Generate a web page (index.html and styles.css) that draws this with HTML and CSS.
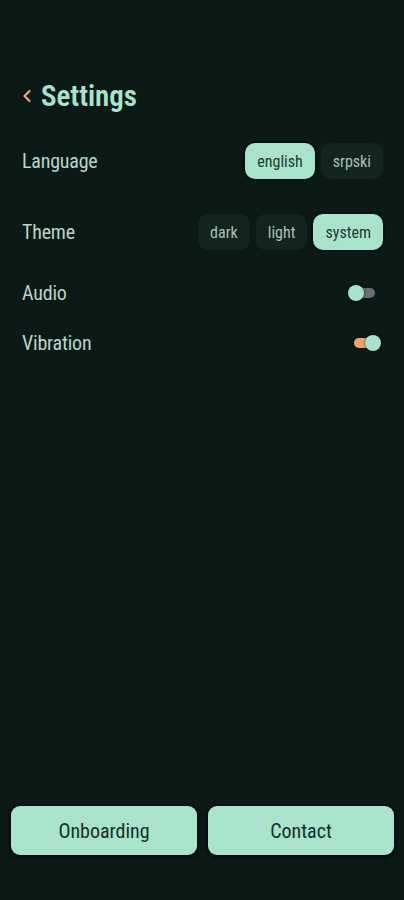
FILE: index.html
```html
<!DOCTYPE html>
<html lang="en">
<head>
    <meta charset="UTF-8">
    <meta name="viewport" content="width=device-width, initial-scale=1.0">
    <title>Settings</title>
    <link rel="stylesheet" href="styles.css">
</head>

<body>
    <div class="screen">
        <div class="content">
            <div class="header">
                <span class="back">
                    <svg width="10" height="14" viewBox="0 0 10 14"><path d="M7.5 2 L2.5 7 L7.5 12" fill="none" stroke="#f0a06a" stroke-width="2.4" stroke-linecap="round" stroke-linejoin="round"/></svg>
                </span>
                <h1>Settings</h1>
            </div>

            <div class="group">
                <div class="setting">
                    <span class="label">Language</span>
                    <div class="pills">
                        <span class="pill active">english</span>
                        <span class="pill">srpski</span>
                    </div>
                </div>
                <div class="setting">
                    <span class="label">Theme</span>
                    <div class="pills">
                        <span class="pill">dark</span>
                        <span class="pill">light</span>
                        <span class="pill active">system</span>
                    </div>
                </div>
            </div>

            <div class="group switches">
                <div class="setting">
                    <span class="label">Audio</span>
                    <span class="toggle off"><span class="knob"></span></span>
                </div>
                <div class="setting">
                    <span class="label">Vibration</span>
                    <span class="toggle on"><span class="knob"></span></span>
                </div>
            </div>
        </div>

        <div class="footer">
            <button class="btn">Onboarding</button>
            <button class="btn">Contact</button>
        </div>
    </div>
</body>
</html>
```

FILE: styles.css
```css
*{
    box-sizing: border-box;
    font-family: "Roboto Condensed", "Open Sans", sans-serif;
    font-stretch: 75%;
}

body{
    margin: 0;
    background-color: #0c1a17;
    color: #b7d4c7;
}

.screen{
    min-height: 100vh;
    display: flex;
    flex-direction: column;
}

.content{
    flex: 1;
    padding: 78px 21px 0 22px;
}

.header{
    display: flex;
    align-items: center;
    gap: 9px;
    height: 36px;
}

.back{
    display: flex;
    align-items: center;
}

.header h1{
    margin: 0;
    font-size: 29px;
    font-weight: 600;
    color: #a9e3cb;
}

.group{
    margin-top: 22px;
    display: flex;
    flex-direction: column;
    gap: 21px;
}

.switches{
    margin-top: 11px;
    gap: 0;
}

.setting{
    display: flex;
    align-items: center;
    justify-content: space-between;
    height: 50px;
}

.label{
    font-size: 20px;
    letter-spacing: -0.2px;
}

.pills{
    display: flex;
    gap: 6px;
}

.pill{
    height: 36px;
    padding: 0 12px;
    display: flex;
    align-items: center;
    border-radius: 10px;
    background-color: #13251f;
    color: #a5c2b6;
    font-size: 16px;
}

.pill.active{
    background-color: #aae3cc;
    color: #1a3a30;
    box-shadow: 0 0 0 2px #07110e;
}

.toggle{
    position: relative;
    width: 27px;
    height: 16px;
    margin-right: 8px;
}

.toggle::before{
    content: "";
    position: absolute;
    left: 2px;
    right: 0;
    top: 3px;
    height: 10px;
    border-radius: 5px;
    background-color: #6b6f72;
}

.toggle.on{
    margin-right: 2px;
}

.toggle.on::before{
    background-color: #f2a26e;
    right: 4px;
    left: 0;
}

.knob{
    position: absolute;
    top: 0;
    left: 0;
    width: 16px;
    height: 16px;
    border-radius: 50%;
    background-color: #a9e2cb;
    box-shadow: 0 0 3px rgba(0,0,0,0.7);
}

.toggle.on .knob{
    left: auto;
    right: 0;
}

.footer{
    display: flex;
    gap: 11px;
    padding: 0 10px 45px 11px;
}

.btn{
    flex: 1;
    height: 49px;
    border: none;
    border-radius: 9px;
    background-color: #aae3cc;
    color: #14302a;
    font-size: 20px;
    box-shadow: 0 1px 4px 1px rgba(0,0,0,0.8);
}
```
